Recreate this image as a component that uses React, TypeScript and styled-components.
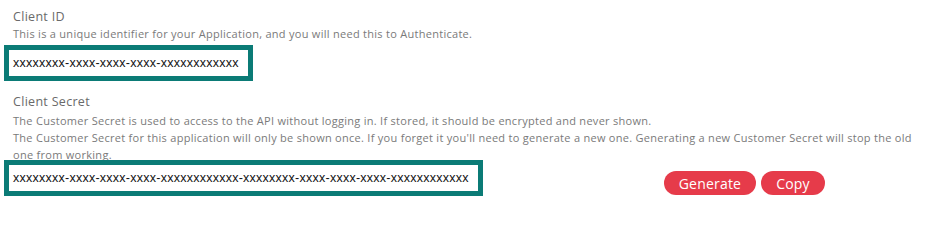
import React from 'react';
import styled, { createGlobalStyle } from 'styled-components';

const GlobalStyle = createGlobalStyle`
  body {
    margin: 0;
    background: #fff;
    font-family: "Open Sans", "Noto Sans", sans-serif;
  }
`;

const Page = styled.div`
  padding: 8px 4px 0;
`;

const Section = styled.section`
  display: flex;
  flex-direction: column;
`;

const Label = styled.div`
  padding-left: 9px;
  font-size: 12.5px;
  line-height: 17px;
  letter-spacing: 0.3px;
  color: #6a6a6a;
`;

const Hint = styled.p<{ $offset?: number }>`
  margin: ${p => p.$offset ?? 0}px 0 0;
  padding-left: 9px;
  font-size: 11px;
  line-height: 17px;
  letter-spacing: 0.28px;
  color: #7a7a7a;
`;

const KeyBox = styled.div<{ $offset?: number }>`
  align-self: flex-start;
  margin-top: ${p => p.$offset ?? 3}px;
  box-sizing: border-box;
  height: 36px;
  padding: 0 9px 0 4px;
  border: 5px solid #0b7b76;
  display: flex;
  align-items: center;
  font-family: "Liberation Sans", Arial, sans-serif;
  font-size: 12.5px;
  letter-spacing: 0.25px;
  color: #111;
  white-space: nowrap;
`;

const KeyRow = styled.div`
  display: flex;
  align-items: flex-end;
  gap: 181px;
`;

const Actions = styled.div`
  display: flex;
  gap: 5px;
  margin-bottom: 1px;
`;

const Pill = styled.button`
  height: 24px;
  padding: 0 15px;
  border: none;
  border-radius: 12px;
  background: #e63b4a;
  color: #fff;
  font-family: "Open Sans", "Noto Sans", sans-serif;
  font-size: 14px;
  letter-spacing: 0.2px;
  cursor: pointer;
`;

const SecretSection = styled(Section)`
  margin-top: 12px;
`;

export default function App() {
  return (
    <Page>
      <GlobalStyle />
      <Section>
        <Label>Client ID</Label>
        <Hint>This is a unique identifier for your Application, and you will need this to Authenticate.</Hint>
        <KeyBox>xxxxxxxx-xxxx-xxxx-xxxx-xxxxxxxxxxxx</KeyBox>
      </Section>
      <SecretSection>
        <Label>Client Secret</Label>
        <Hint $offset={2}>
          The Customer Secret is used to access to the API without logging in. If stored, it should be encrypted and never shown.
          <br />
          The Customer Secret for this application will only be shown once. If you forget it you'll need to generate a new one. Generating a new Customer Secret will stop the old one from working.
        </Hint>
        <KeyRow>
          <KeyBox $offset={-3}>xxxxxxxx-xxxx-xxxx-xxxx-xxxxxxxxxxxx-xxxxxxxx-xxxx-xxxx-xxxx-xxxxxxxxxxxx</KeyBox>
          <Actions>
            <Pill>Generate</Pill>
            <Pill>Copy</Pill>
          </Actions>
        </KeyRow>
      </SecretSection>
    </Page>
  );
}
